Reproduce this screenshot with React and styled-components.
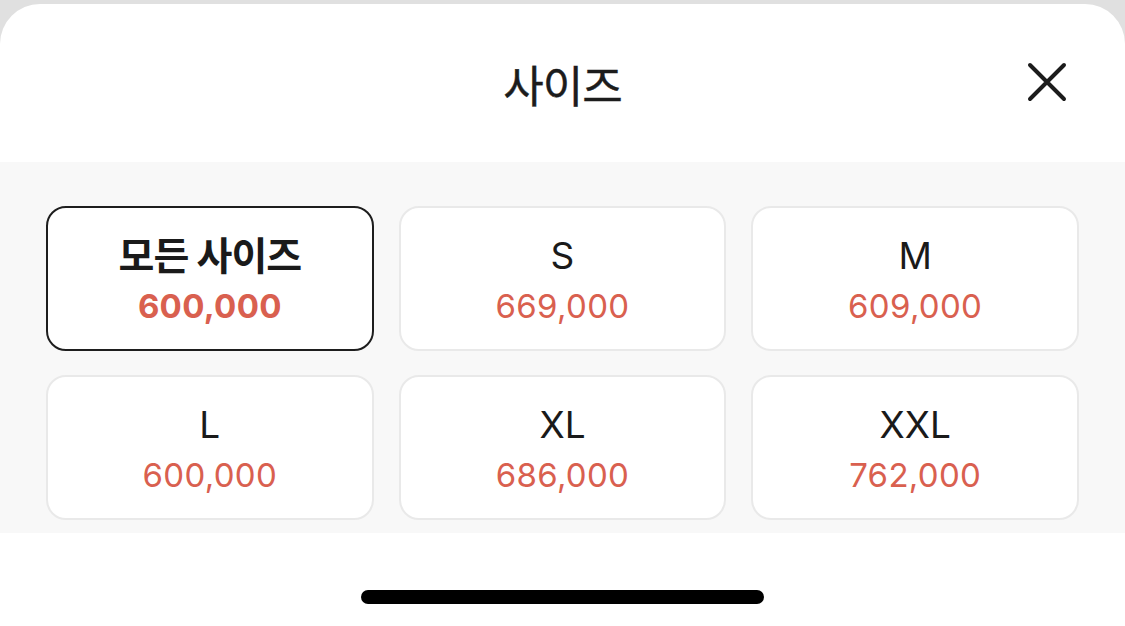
import styled, { createGlobalStyle } from "styled-components";

const GlobalStyle = createGlobalStyle`
  html, body {
    margin: 0;
    padding: 0;
    background: #e0e0e0;
  }
  body {
    font-family: "Inter", "Noto Sans CJK KR", sans-serif;
    -webkit-font-smoothing: antialiased;
  }
`;

const Sheet = styled.div`
  margin-top: 4px;
  height: 622px;
  background: #ffffff;
  border-radius: 40px 40px 0 0;
  display: flex;
  flex-direction: column;
  overflow: hidden;
`;

const Header = styled.div`
  height: 158px;
  position: relative;
  display: flex;
  align-items: center;
  justify-content: center;
`;

const Title = styled.h1`
  margin: 0;
  font-family: "Noto Sans CJK KR", sans-serif;
  font-size: 44px;
  font-weight: 400;
  color: #1c1c1c;
  letter-spacing: -1px;
  line-height: 1;
  padding-top: 2px;
  -webkit-text-stroke: 0.4px #1c1c1c;
`;

const CloseButton = styled.button`
  position: absolute;
  right: 56px;
  top: 56px;
  width: 44px;
  height: 44px;
  padding: 0;
  border: none;
  background: none;
  display: flex;
  align-items: center;
  justify-content: center;
`;

const Section = styled.div`
  background: #f8f8f8;
  padding: 44px 46px 13px;
  display: grid;
  grid-template-columns: repeat(3, 1fr);
  column-gap: 25px;
  row-gap: 24px;
`;

const Card = styled.div`
  height: 145px;
  box-sizing: border-box;
  background: #ffffff;
  border: 2px solid ${(p) => (p.$active ? "#1e1e1e" : "#e9e9e9")};
  border-radius: 20px;
  display: flex;
  flex-direction: column;
  align-items: center;
  justify-content: center;
  gap: 9px;
  padding-top: 2px;
`;

const Name = styled.div`
  font-size: ${(p) => (p.$active ? "39px" : "37px")};
  font-weight: ${(p) => (p.$active ? 700 : 400)};
  color: #1a1a1a;
  line-height: 44px;
  letter-spacing: ${(p) => (p.$active ? "-1px" : "0")};
`;

const Price = styled.div`
  font-size: 33px;
  font-weight: ${(p) => (p.$active ? 700 : 400)};
  color: #d9604f;
  line-height: 38px;
  letter-spacing: 0.3px;
`;

const Footer = styled.div`
  flex: 1;
  display: flex;
  justify-content: center;
  padding-top: 57px;
`;

const HomeIndicator = styled.div`
  width: 403px;
  height: 14px;
  border-radius: 7px;
  background: #000000;
`;

const sizes = [
  { name: "모든 사이즈", price: "600,000", active: true },
  { name: "S", price: "669,000" },
  { name: "M", price: "609,000" },
  { name: "L", price: "600,000" },
  { name: "XL", price: "686,000" },
  { name: "XXL", price: "762,000" },
];

export default function App() {
  return (
    <>
      <GlobalStyle />
      <Sheet>
        <Header>
          <Title>사이즈</Title>
          <CloseButton aria-label="닫기">
            <svg width="40" height="40" viewBox="0 0 40 40" fill="none">
              <path
                d="M3 3L37 37M37 3L3 37"
                stroke="#1c1c1c"
                strokeWidth="4"
                strokeLinecap="round"
              />
            </svg>
          </CloseButton>
        </Header>
        <Section>
          {sizes.map((s) => (
            <Card key={s.name} $active={s.active}>
              <Name $active={s.active}>{s.name}</Name>
              <Price $active={s.active}>{s.price}</Price>
            </Card>
          ))}
        </Section>
        <Footer>
          <HomeIndicator />
        </Footer>
      </Sheet>
    </>
  );
}
